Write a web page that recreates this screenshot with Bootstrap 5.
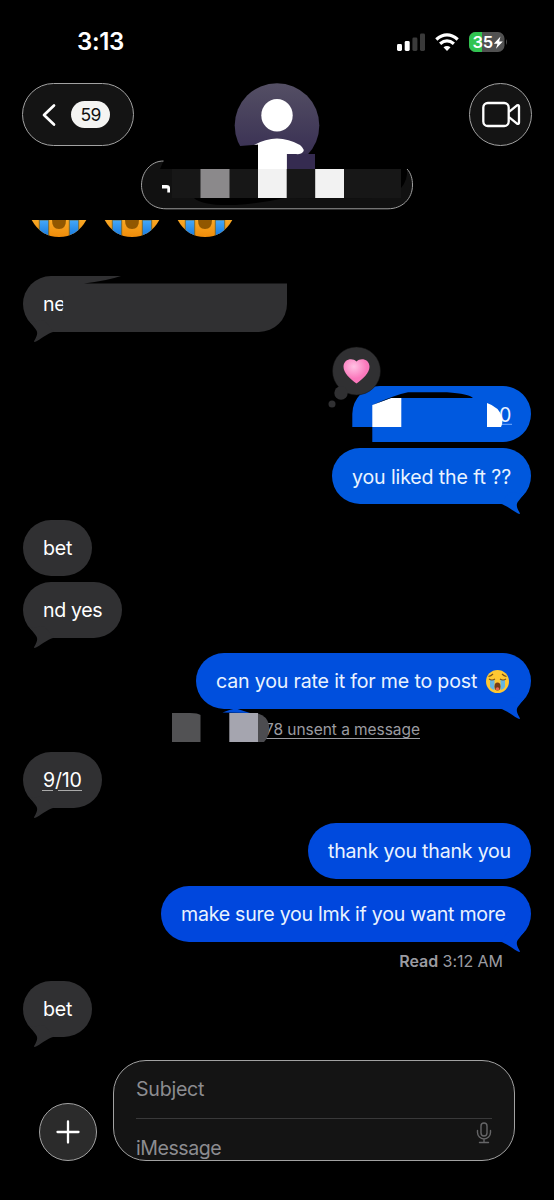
<!DOCTYPE html>
<html lang="en">
<head>
<meta charset="utf-8">
<meta name="viewport" content="width=device-width, initial-scale=1">
<title>Messages</title>
<link href="https://cdn.jsdelivr.net/npm/bootstrap@5.3.0/dist/css/bootstrap.min.css" rel="stylesheet">
<style>
  body { background:#000; color:#fff; font-family:Inter,"Liberation Sans",sans-serif; font-size:19.6px; line-height:24px; letter-spacing:-.24px; }
  svg { display:block; flex:none; }
  .phone { width:554px; height:1200px; }
  .status { height:83px; padding:0 47px 0 77px; }
  .clock { font-size:24px; font-weight:600; letter-spacing:-.35px; }
  .topbar { height:127px; padding:0 22px; }
  .glass { background:#141414; border:1px solid #a2a2a2; }
  .back { width:112px; height:63px; padding-left:18px; gap:15px; border-radius:32px; }
  .unread { width:39px; height:27px; border-radius:14px; background:#f4f4f2; color:#111; font-size:17.5px; letter-spacing:-.8px; }
  .video { width:63px; height:63px; }
  .contact { width:272px; margin-left:7px; }
  .thread { padding:10px 23px 0; }
  .cries { height:17px; gap:13px; padding-left:6px; }
  .bubble { position:relative; height:56px; border-radius:28px; padding-left:20px; display:flex; align-items:center; white-space:nowrap; }
  .in { background:#303032; align-self:flex-start; }
  .out { align-self:flex-end; color:#eaf3ff; }
  .tail::after { content:""; position:absolute; right:7px; bottom:-10px; width:24px; height:24px; background:inherit;
    clip-path:path("M0 13.8C5 14.500 10 19 17.500 23.300C20 24.500 20.500 24 19.300 22C16.300 17 16 14 18.500 11L24 4L10 2Z"); }
  .in.tail::after { right:auto; left:7px; transform:scaleX(-1); }
  .g6 { margin-top:6px; } .g15 { margin-top:15px; }
  .meta { color:#9b9ba1; font-size:16px; line-height:20px; letter-spacing:-.05px; }
  .composer { padding:0 39px; gap:16px; margin-top:23px; }
  .plus { width:58px; height:58px; background:#2b2b2b; }
  .field { width:402px; height:101px; border-radius:33px; padding:16px 22px 0; color:#8c8c90; overflow:hidden; }
  .rule { height:1px; background:#39393a; }
</style>
</head>
<body>
<main class="phone d-flex flex-column overflow-hidden">
  <div class="status d-flex align-items-center justify-content-between">
    <span class="clock">3:13</span>
    <svg width="110" height="24" viewBox="397 29 110 24">
      <g fill="#fff"><rect x="397" y="43" width="5" height="7" rx="1.4"/><rect x="404.700" y="40" width="5" height="10" rx="1.400"/></g>
      <g fill="#3a3a3a"><rect x="412.400" y="36.500" width="5" height="13.500" rx="1.400"/><rect x="420" y="32.500" width="5" height="17.500" rx="1.400"/></g>
      <g fill="none" stroke="#fff" stroke-width="3.300"><path d="M436.300 38.500Q447 29.300 457.700 38.500"/><path d="M440.100 42.800Q447 37 453.900 42.800"/></g>
      <path d="M443.500 46.300Q447 43.500 450.500 46.300L447 50Z" fill="#fff"/>
      <rect x="469" y="31" width="35.500" height="20" rx="6.500" fill="#515151"/>
      <path d="M475.500 31H482V51H475.500A6.500 6.500 0 0 1 469 44.500V37.500A6.500 6.500 0 0 1 475.500 31Z" fill="#30c450"/>
      <path d="M506 38Q507.500 41 506 44Z" fill="#666"/>
      <text x="472.500" y="47" font-size="16.500" font-weight="600" letter-spacing="-.2" fill="#fff">35</text>
      <path d="M500.500 35.500L493.800 42.800H497.500L496 47.800L502.800 40.500H499.100Z" fill="#fff"/>
    </svg>
  </div>

  <header class="topbar d-flex">
    <div class="back glass d-flex align-items-center">
      <svg width="15" height="24" viewBox="0 0 15 24"><path d="M13 2.500L3 12L13 21.500" fill="none" stroke="#fff" stroke-width="2.700" stroke-linecap="round" stroke-linejoin="round"/></svg>
      <span class="unread d-flex align-items-center justify-content-center">59</span>
    </div>
    <svg class="contact" height="127" viewBox="141 83 272 127">
      <defs><linearGradient id="av" x1="0" y1="0" x2="0" y2="1"><stop offset="0" stop-color="#544f64"/><stop offset="1" stop-color="#342a50"/></linearGradient></defs>
      <circle cx="277" cy="125.500" r="42.300" fill="url(#av)"/>
      <path d="M234 146.500L258 144.500V169H234ZM286 154H325V170H286Z" fill="#000"/>
      <ellipse cx="277" cy="115.300" rx="15.700" ry="16.300" fill="#fff"/>
      <path d="M286.700 154H315V170H286.700Z" fill="#352b50"/>
      <path d="M254 145Q277 132 300 145Q306 150 302 153Q300 154.500 296 154H286.700V170H258V144.500Z" fill="#fff"/>
      <path d="M163.500 161C151 161 141.500 172 141.500 185.200C141.500 198 151 208.800 166 208.800H388C402 208.800 412.500 199 412.500 185C412.500 179 411 173 407 169H160Z" fill="#111"/>
      <path d="M258 144.500H286.700V170H258Z" fill="#fff"/>
      <path d="M401 169H407Q408 180 401 188Z" fill="#000"/>
      <path d="M194 198Q202 206 235 205Q263 203 285 198L382 198.500L194 197Z" fill="#000"/>
      <path d="M163.500 161C151 161 141.500 172 141.500 185.200C141.500 198 151 208.800 166 208.800H388C402 208.800 412.500 199 412.500 185C412.500 179 411 173 407 169" fill="none" stroke="#a0a0a0"/>
      <rect x="172" y="169" width="229" height="29" fill="#171717"/>
      <rect x="200.500" y="169" width="29" height="29" fill="#8b898b"/>
      <path d="M258 169H286.700V198H258ZM315.200 169H344V198H315.200Z" fill="#f2f2f2"/>
      <path d="M162 185H166.500Q170 185 170 188V192.500H167.300V188.500H162Z" fill="#fff"/>
    </svg>
    <div class="video glass rounded-circle d-flex align-items-center justify-content-center ms-auto">
      <svg width="40" height="28" viewBox="0 0 40 28"><g fill="none" stroke="#fff" stroke-width="2.300" stroke-linejoin="round"><rect x="2.300" y="2" width="25.400" height="23" rx="4.500"/><path d="M28 10.800L36 4.400Q38 3.400 38 5.500V21.500Q38 23.600 36 22.600L28 16.200"/></g></svg>
    </div>
  </header>

  <section class="thread d-flex flex-column">
    <svg width="0" height="0" class="position-absolute">
      <defs>
        <linearGradient id="face" x1="0" y1="0" x2="0" y2="1"><stop offset="0" stop-color="#f9a825"/><stop offset="1" stop-color="#ee8a08"/></linearGradient>
        <linearGradient id="tear" x1="0" y1="0" x2="0" y2="1"><stop offset="0" stop-color="#45a8f8"/><stop offset="1" stop-color="#1476dc"/></linearGradient>
        <clipPath id="chin"><path d="M2.700 0H57.300Q48 17 30 17Q12 17 2.700 0Z"/></clipPath>
        <g id="cry" clip-path="url(#chin)"><path d="M0 0H60V18H0Z" fill="url(#face)"/><path d="M10.300 0H19.700V18H10.300ZM40.300 0H49.700V18H40.300Z" fill="url(#tear)" stroke="#74601f" stroke-width=".8"/><path d="M23 0H37Q37 9 30 9Q23 9 23 0Z" fill="#915700"/></g>
      </defs>
    </svg>
    <div class="cries d-flex">
      <svg width="60" height="17"><use href="#cry"/></svg><svg width="60" height="17"><use href="#cry"/></svg><svg width="60" height="17"><use href="#cry"/></svg>
    </div>

    <div class="bubble in tail" style="width:264px;margin-top:39px;border-radius:28px 0 28px 28px">
      <svg class="position-absolute top-0 start-0" width="264" height="56"><path d="M98 0H264V7.500H61Q83 5 98 0Z" fill="#000"/></svg>
      <span style="position:relative">ne</span>
      <svg class="position-absolute" style="left:39px;top:18px" width="8" height="24"><path d="M1.500 0H8V24H1.500L.5 15L2 13.500L1 11Z" fill="#303032"/></svg>
    </div>

    <div class="position-relative align-self-end" style="width:179px;height:56px;margin-top:54px">
      <svg width="179" height="56" viewBox="352 386 179 56">
        <path d="M380 386H503A28 28 0 0 1 503 442H372.300V427H352.300V414A28 28 0 0 1 380 386Z" fill="#0059df"/>
        <path d="M372.300 405L391 398H401.300V427H372.300Z" fill="#fff"/>
        <path d="M372.300 405Q395 395 408 392.300H447Q469 394 473 398H391Z" fill="#000"/>
        <text x="499" y="421.500" font-size="19.600" fill="#eaf3ff">0</text>
        <path d="M487 403Q499 407 502 417Q503 423 501 427H487Z" fill="#fff"/><path d="M502 424.300H512" stroke="#75abff"/>
      </svg>
      <svg class="position-absolute" style="left:-25px;top:-40px" width="56" height="64" viewBox="327 346 56 64">
        <defs><radialGradient id="pink" cx=".4" cy=".3"><stop offset="0" stop-color="#ffc2e4"/><stop offset="1" stop-color="#fb78bc"/></radialGradient></defs>
        <g fill="#303032"><circle cx="356.500" cy="371" r="24" stroke="#111" stroke-width=".5"/><circle cx="341" cy="393" r="6.700"/><circle cx="332" cy="404" r="3.500"/></g>
        <path d="M356.500 383.500C350 379 343.500 373 343.500 366.800C343.500 359 352.500 357.500 356.500 361.500C360.500 357.500 369.500 359 369.500 366.800C369.500 373 363 379 356.500 383.500Z" fill="url(#pink)"/>
      </svg>
    </div>
    <div class="bubble out tail g6" style="width:199px;background:#0058dd"><span style="letter-spacing:-.14px;padding-top:2px">you liked the ft ??</span></div>
    <div class="bubble in" style="width:69px;margin-top:16px"><span>bet</span></div>
    <div class="bubble in tail g6" style="width:99px"><span style="letter-spacing:-.38px">nd yes</span></div>
    <div class="bubble out tail g15" style="width:335px;background:#004fdd"><span style="letter-spacing:-.18px">can you rate it for me to post</span>
      <svg class="position-absolute" style="left:289px;top:16px" width="25" height="25" viewBox="0 0 25 25">
        <circle cx="12.500" cy="12.500" r="11.500" fill="#ffc832"/><path d="M5 11H9.500V21Q7 21 5 18ZM15.500 11H20V18Q18 21 15.500 21Z" fill="#64b6e2"/>
        <path d="M3.500 7.500Q6 7 8 5M21.500 7.500Q19 7 17 5M4 10Q7 12 10 10M15 10Q18 12 21 10" fill="none" stroke="#785019" stroke-width="1.200"/>
        <ellipse cx="12.500" cy="17.500" rx="3" ry="4" fill="#743c17"/><ellipse cx="12.500" cy="19.800" rx="1.800" ry="1.500" fill="#ee6650"/>
      </svg>
    </div>
    <div class="meta position-relative" style="height:43px;padding:12px 0 0 242px;line-height:16px;white-space:nowrap">
      <span class="d-inline-block" style="border-bottom:1px solid #9b9ba1;font-size:15.500px;letter-spacing:-.05px;line-height:16px">78 unsent a message</span>
      <svg class="position-absolute" style="left:149px;top:-1px" width="100" height="35" viewBox="172 708 100 35">
        <path d="M222.500 712.500Q231 709 236 708.500L250 713Z" fill="#004fdd"/>
        <path d="M172 713H190Q198 713 200.500 715V742H172Z" fill="#525254"/><path d="M229.300 713H258V742H229.300Z" fill="#a5a5af"/><path d="M258 713.500Q267 716 269 725Q270 736 264 742H258Z" fill="#4c4c50"/>
      </svg>
    </div>
    <div class="bubble in tail" style="width:79px"><span>9/10</span>
      <svg class="position-absolute" style="left:19px;top:37px" width="42" height="3"><path d="M0 1.500H11M16 1.500H40" stroke="#aaa" stroke-width="1.200"/></svg>
    </div>
    <div class="bubble out g15" style="width:223px;background:#004add"><span style="letter-spacing:-.22px">thank you thank you</span></div>
    <div class="bubble out tail" style="width:370px;background:#0047dd;margin-top:7px"><span style="letter-spacing:-.27px">make sure you lmk if you want more</span></div>
    <div class="meta align-self-end" style="height:39px;padding:9px 28px 0 0"><b class="fw-semibold">Read</b> <span>3:12 AM</span></div>
    <div class="bubble in tail" style="width:69px"><span>bet</span></div>
  </section>

  <footer class="composer d-flex align-items-end">
    <div class="plus glass rounded-circle d-flex align-items-center justify-content-center" style="background:#2b2b2b">
      <svg width="24" height="24"><path d="M12 1.500V22.500M1.500 12H22.500" stroke="#fff" stroke-width="2.300" stroke-linecap="round"/></svg>
    </div>
    <div class="field glass flex-shrink-0">
      <div style="height:41px">Subject</div>
      <div class="rule"></div>
      <div class="d-flex justify-content-between">
        <span style="padding-top:17px;letter-spacing:-.48px">iMessage</span>
        <svg width="16" height="22" viewBox="0 0 16 22" style="margin-top:3px"><g fill="none" stroke="#656567" stroke-width="1.400" stroke-linecap="round"><rect x="5" y="1" width="6" height="13" rx="3"/><path d="M1.500 8.500V10.500A6.500 6.500 0 0 0 14.500 10.500V8.500M8 17V20.500M3.500 20.500H12.500"/></g></svg>
      </div>
    </div>
  </footer>
</main>
<script src="https://cdn.jsdelivr.net/npm/bootstrap@5.3.0/dist/js/bootstrap.bundle.min.js"></script>
</body>
</html>
